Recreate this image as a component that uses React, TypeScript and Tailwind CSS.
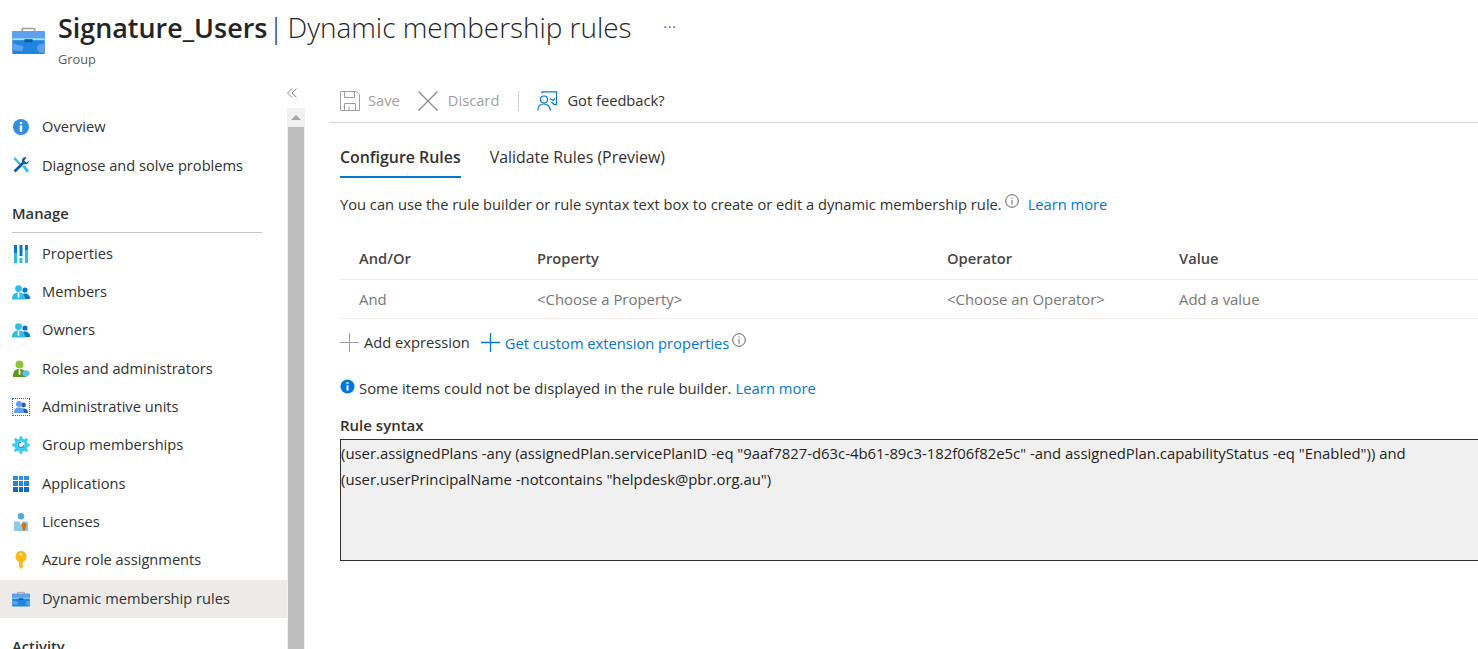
import { ReactNode } from 'react';

const Briefcase = ({ size }: { size: number }) => (
  <svg width={size} height={size * 0.86} viewBox="0 0 32 28">
    <path d="M10 6V2.500h12V6" fill="none" stroke="#a19f9d" strokeWidth="1.600" />
    <rect x="0" y="5" width="32" height="23" rx="1" fill="#1f86e0" />
    <rect x="0" y="5" width="32" height="7" fill="#5ea0ef" />
    <rect x="0" y="12" width="32" height="2" fill="#9be0f7" />
    <rect x="12" y="13" width="8" height="3" fill="#0a5aa8" />
    <path d="M0 17l11 3-1 5-10-1z" fill="#5ea0ef" />
    <circle cx="29" cy="22" r="4.500" fill="#5ea0ef" />
  </svg>
);

const InfoIcon = () => (
  <svg width="18" height="18" viewBox="0 0 18 18">
    <circle cx="9" cy="9" r="8" fill="#2f8fe6" />
    <circle cx="9" cy="5" r="1.300" fill="#fff" />
    <rect x="7.800" y="7.400" width="2.400" height="6.400" fill="#fff" />
  </svg>
);

const ToolsIcon = () => (
  <svg width="18" height="18" viewBox="0 0 18 18">
    <path d="M3 1l6 6.500-1.500 1.500L1.500 3z" fill="#32bedd" />
    <path d="M10.500 10.500l2-1.500 4.500 5.500-2.200 2.200z" fill="#32bedd" />
    <path d="M13.500 1a3.600 3.600 0 0 0-3.300 5L1.500 14.500 3.500 16.500 12 8a3.600 3.600 0 0 0 5-3.300l-2.500 2-2.300-2.200 2.200-2.700z" fill="#0a5aa8" />
  </svg>
);

const PropertiesIcon = () => (
  <svg width="16" height="18" viewBox="0 0 16 18">
    <rect x="1" y="0" width="3" height="18" fill="#32bedd" />
    <rect x="1" y="0" width="3" height="8" fill="#0078d4" />
    <rect x="6.500" y="0" width="3" height="11" fill="#0078d4" />
    <rect x="6.500" y="13" width="3" height="5" fill="#32bedd" />
    <rect x="12" y="0" width="3" height="18" fill="#32bedd" />
    <rect x="12" y="0" width="3" height="5" fill="#0078d4" />
  </svg>
);

const PeopleIcon = () => (
  <svg width="18" height="15" viewBox="0 0 18 15">
    <circle cx="13" cy="5" r="2.600" fill="#0078d4" />
    <path d="M9 14c0-4 1.500-5.400 4-5.400s5 1.400 5 5.400z" fill="#0078d4" />
    <circle cx="6.500" cy="3.600" r="3.400" fill="#32bedd" />
    <path d="M0 14.500c0-5 2-7 6.500-7s6.500 2 6.500 7z" fill="#32bedd" />
    <path d="M5.800 8h1.400l.3 4-1 1-1-1z" fill="#fff" />
  </svg>
);

const RolesIcon = () => (
  <svg width="18" height="18" viewBox="0 0 18 18">
    <circle cx="7.500" cy="4.500" r="4" fill="#8cc63f" />
    <path d="M1 17c0-6 2-8 6.500-8s6.500 2 6.500 8z" fill="#5e9624" />
    <path d="M6.800 9h1.400l.4 5-1 1-1-1z" fill="#fff" />
    <path d="M14 10l3.500 1.600v3.200L14 17l-3.500-2.200v-3.200z" fill="#59c3e8" />
  </svg>
);

const AdminUnitsIcon = () => (
  <div className="w-[18px] h-[18px] border border-dotted border-[#0078d4] flex items-center justify-center">
    <svg width="14" height="12" viewBox="0 0 14 12">
      <circle cx="9.500" cy="4" r="2.400" fill="#2a5fb0" />
      <path d="M6 12c0-3.500 1-4.600 3.500-4.600S14 8.500 14 12z" fill="#2a5fb0" />
      <circle cx="5" cy="3" r="3" fill="#5ea0ef" />
      <path d="M0 12c0-4 1.500-5.500 5-5.500s5 1.500 5 5.500z" fill="#5ea0ef" />
    </svg>
  </div>
);

const GearIcon = () => (
  <svg width="18" height="18" viewBox="0 0 18 18">
    <circle cx="9" cy="9" r="6.600" fill="#3ccbf0" />
    {[0, 45, 90, 135, 180, 225, 270, 315].map(a => (
      <rect key={a} x="7.600" y="0.200" width="2.800" height="3.400" fill="#3ccbf0" transform={`rotate(${a} 9 9)`} />
    ))}
    <circle cx="9" cy="9" r="3.600" fill="#fff" />
    <path d="M9 5.500a3.500 3.500 0 1 0 3.500 3.500H11a2 2 0 1 1-2-2z" fill="#1f9fe0" />
  </svg>
);

const GridIcon = () => (
  <div className="w-4 h-4 grid grid-cols-3 gap-px">
    {['#2f8fe6', '#2f8fe6', '#2f8fe6', '#1f86e0', '#1f86e0', '#1f86e0', '#0a6cc4', '#0a6cc4', '#0a6cc4'].map((c, i) => (
      <span key={i} style={{ background: c }} />
    ))}
  </div>
);

const LicenseIcon = () => (
  <svg width="14" height="18" viewBox="0 0 14 18">
    <circle cx="7" cy="3.300" r="3.300" fill="#59a9d8" />
    <path d="M0 18V8.500h14V18z" fill="#8cc8ec" />
    <path d="M5.500 8.500h3L7 13z" fill="#fff" />
    <circle cx="10" cy="12" r="2.600" fill="#d9730d" />
    <path d="M8.500 13.500V18l1.500-1 1.500 1v-4.500z" fill="#d9730d" />
  </svg>
);

const KeyIcon = () => (
  <svg width="12" height="18" viewBox="0 0 12 18">
    <path d="M6 0a5.500 5.500 0 0 0-2 10.600V16l2 2 2-2v-1.500l-1-1 1-1v-1.900A5.500 5.500 0 0 0 6 0z" fill="#fcb814" />
    <circle cx="6" cy="3.500" r="1.300" fill="#fff3c4" />
  </svg>
);

const nav: { label: string; icon: ReactNode; active?: boolean }[] = [
  { label: 'Properties', icon: <PropertiesIcon /> },
  { label: 'Members', icon: <PeopleIcon /> },
  { label: 'Owners', icon: <PeopleIcon /> },
  { label: 'Roles and administrators', icon: <RolesIcon /> },
  { label: 'Administrative units', icon: <AdminUnitsIcon /> },
  { label: 'Group memberships', icon: <GearIcon /> },
  { label: 'Applications', icon: <GridIcon /> },
  { label: 'Licenses', icon: <LicenseIcon /> },
  { label: 'Azure role assignments', icon: <KeyIcon /> },
  { label: 'Dynamic membership rules', icon: <Briefcase size={18} />, active: true },
];

function NavRow({ label, icon, active }: { label: string; icon: ReactNode; active?: boolean }) {
  return (
    <div className={`h-[38.33px] flex items-center pl-3 ${active ? 'bg-[#edebe9]' : ''}`}>
      <span className="w-[18px] flex justify-center shrink-0">{icon}</span>
      <span className="ml-3 text-[14.650px] text-[#323130] whitespace-nowrap">{label}</span>
    </div>
  );
}

const SmallInfo = ({ className }: { className: string }) => (
  <svg className={className} width="14" height="14" viewBox="0 0 14 14" fill="none" stroke="#605e5c">
    <circle cx="7" cy="7" r="6.300" />
    <path d="M7 6v4.500M7 3.500v1.200" />
  </svg>
);

export default function App() {
  return (
    <div className="h-[649px] overflow-hidden bg-white flex flex-col text-[#323130] font-['Open_Sans','Liberation_Sans',sans-serif]">
      <div className="h-[82px] shrink-0 flex pl-3 pt-[26px]">
        <Briefcase size={33} />
        <div className="ml-[13px] -mt-[18px]">
          <div className="flex items-center h-[40px]">
            <h1 className="flex items-baseline whitespace-nowrap text-[#242424]">
              <span className="font-semibold text-[26.900px]">Signature_Users</span>
              <span className="font-light text-[27.900px] ml-[1px]">|</span>
              <span className="font-light text-[27.900px] ml-[4px]">Dynamic membership rules</span>
            </h1>
            <span className="ml-[32px] text-[14px] text-[#605e5c] -mt-1 tracking-wider">···</span>
          </div>
          <div className="text-[12.800px] text-[#605e5c] mt-[2px]">Group</div>
        </div>
      </div>

      <div className="flex-1 flex min-h-0">
        <div className="w-[330px] shrink-0 flex flex-col">
          <div className="h-[26px] shrink-0 w-[305px] flex justify-end pr-[7px] pt-[5px]">
            <svg width="12" height="12" viewBox="0 0 12 12" fill="none" stroke="#8a8886">
              <path d="M6 1.500L1.500 6 6 10.500M10.500 1.500L6 6l4.500 4.500" />
            </svg>
          </div>
          <div className="flex-1 flex w-[305px] min-h-0">
            <div className="w-[287px] shrink-0 overflow-hidden">
              <div>
                <NavRow label="Overview" icon={<InfoIcon />} />
                <NavRow label="Diagnose and solve problems" icon={<ToolsIcon />} />
              </div>
              <div className="mt-[9px] ml-3 mr-[25px] h-[39px] border-b border-[#c8c6c4] flex items-center text-[14.750px] font-semibold">Manage</div>
              <div className="mt-[2px]">
                {nav.map(n => <NavRow key={n.label} {...n} />)}
              </div>
              <div className="ml-3 mt-[17px] text-[14.750px] font-semibold">Activity</div>
            </div>
            <div className="w-[18px] shrink-0 bg-[#f1f1f1] flex flex-col items-center">
              <div className="h-[19px] w-full flex items-center justify-center">
                <div className="w-0 h-0 border-x-[5px] border-x-transparent border-b-[5px] border-b-[#a6a6a6]" />
              </div>
              <div className="flex-1 w-[16px] bg-[#bdbdbd]" />
            </div>
          </div>
        </div>

        <div className="flex-1 min-w-0 flex flex-col">
          <div className="h-[41px] shrink-0 border-b border-[#d2d0ce] flex items-center pl-[10px] text-[14.700px] pb-[3px]">
            <svg width="20" height="20" viewBox="0 0 20 20" fill="none" stroke="#a19f9d">
              <path d="M.5.500h16l3 3v16H.500z" />
              <path d="M4.500.500v6h10v-6M4.500 19.500v-7h11v7M9 15.500v4" />
            </svg>
            <span className="ml-[8px] text-[#a19f9d]">Save</span>
            <svg className="ml-[17px]" width="22" height="22" viewBox="0 0 22 22" fill="none" stroke="#8a8886" strokeWidth="1.200">
              <path d="M1.500 1.500l19 19M20.500 1.500l-19 19" />
            </svg>
            <span className="ml-[9px] text-[#a19f9d]">Discard</span>
            <span className="ml-[19px] w-px h-5 bg-[#d2d0ce]" />
            <svg className="ml-[18px]" width="20" height="20" viewBox="0 0 20 20" fill="none" stroke="#0078d4" strokeWidth="1.200">
              <path d="M5 2.500V.800h14.500v12.700H17l-2.500-2.500" />
              <circle cx="7" cy="8.500" r="3.500" />
              <path d="M.800 19.500c0-4 2.500-6.500 6.200-6.500s6.200 2.500 6.200 6.500M13 7.500l3 2 2-2" />
            </svg>
            <span className="ml-[10px]">Got feedback?</span>
          </div>

          <div className="pl-[10px] flex flex-col">
            <div className="flex mt-[20px] text-[15.900px] h-[34px]">
              <div className="border-b-2 border-[#0078d4] font-semibold h-[35px] pt-[3px] whitespace-nowrap">Configure Rules</div>
              <div className="ml-[29px] pt-[3px] whitespace-nowrap">Validate Rules (Preview)</div>
            </div>

            <div className="mt-[17px] flex items-center text-[14.700px] h-[20px] whitespace-nowrap">
              You can use the rule builder or rule syntax text box to create or edit a dynamic membership rule.
              <SmallInfo className="ml-[3px] -mt-[6px]" />
              <span className="ml-[9px] text-[#0078d4]">Learn more</span>
            </div>

            <div className="mt-[23px] grid grid-cols-[197px_410px_232px_1fr] -mr-[10px]">
              <div className="h-[43px] flex items-center pl-[19px] text-[14.700px] font-semibold text-[#484644] border-b border-[#edebe9]">And/Or</div>
              <div className="h-[43px] flex items-center text-[14.700px] font-semibold text-[#484644] border-b border-[#edebe9]">Property</div>
              <div className="h-[43px] flex items-center text-[14.700px] font-semibold text-[#484644] border-b border-[#edebe9]">Operator</div>
              <div className="h-[43px] flex items-center text-[14.700px] font-semibold text-[#484644] border-b border-[#edebe9]">Value</div>
              <div className="h-[39px] flex items-center pl-[19px] text-[14.900px] text-[#797775] border-b border-[#edebe9]">And</div>
              <div className="h-[39px] flex items-center text-[14.900px] text-[#797775] border-b border-[#edebe9]">&lt;Choose a Property&gt;</div>
              <div className="h-[39px] flex items-center text-[14.900px] text-[#797775] border-b border-[#edebe9]">&lt;Choose an Operator&gt;</div>
              <div className="h-[39px] flex items-center text-[14.900px] text-[#797775] border-b border-[#edebe9]">Add a value</div>
            </div>

            <div className="mt-[11px] flex items-center text-[14.700px] h-[24px] whitespace-nowrap">
              <svg width="19" height="19" viewBox="0 0 19 19" stroke="#a19f9d"><path d="M9.500 0v19M0 9.500h19" /></svg>
              <span className="ml-[5px]">Add expression</span>
              <svg className="ml-[11px]" width="19" height="19" viewBox="0 0 19 19" stroke="#0078d4" strokeWidth="1.300"><path d="M9.500 0v19M0 9.500h19" /></svg>
              <span className="ml-[5px] text-[#0078d4] mt-[2px]">Get custom extension properties</span>
              <SmallInfo className="ml-[3px] -mt-[4px]" />
            </div>

            <div className="mt-[24px] flex items-center text-[14.850px] h-[20px] whitespace-nowrap">
              <svg width="15" height="15" viewBox="0 0 15 15" className="-mt-[3px]">
                <circle cx="7.500" cy="7.500" r="7" fill="#0078d4" />
                <circle cx="7.500" cy="4.200" r="1.100" fill="#fff" />
                <rect x="6.500" y="6.300" width="2" height="5.200" fill="#fff" />
              </svg>
              <span className="ml-[4px]">Some items could not be displayed in the rule builder.</span>
              <span className="ml-[4px] text-[#0078d4]">Learn more</span>
            </div>

            <div className="mt-[17px] text-[15px] font-semibold h-[20px] flex items-center">Rule syntax</div>

            <div className="mt-[4px] -mr-[40px] h-[122px] border border-[#323130] bg-[#f0f0f0] text-[14.870px] leading-[26px] text-[#252423] whitespace-nowrap">
              (user.assignedPlans -any (assignedPlan.servicePlanID -eq "9aaf7827-d63c-4b61-89c3-182f06f82e5c" -and assignedPlan.capabilityStatus -eq "Enabled")) and
              <br />
              (user.userPrincipalName -notcontains "helpdesk@pbr.org.au")
            </div>
          </div>
        </div>
      </div>
    </div>
  );
}
